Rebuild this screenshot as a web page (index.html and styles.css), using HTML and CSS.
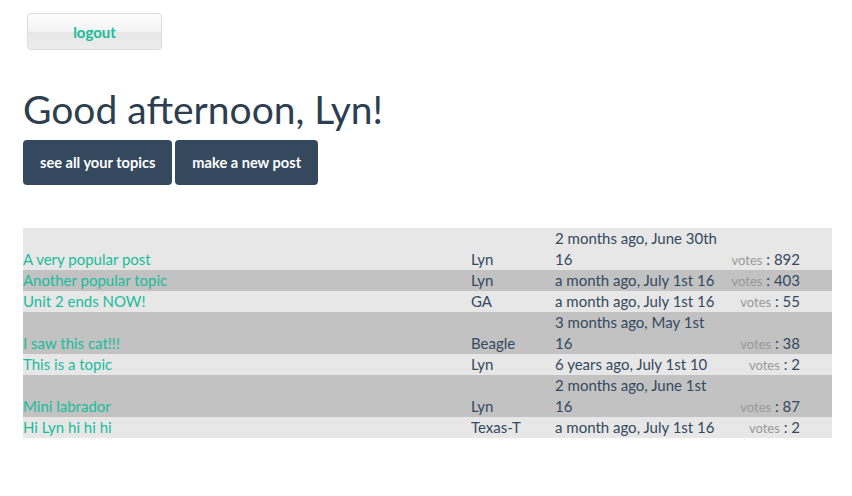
FILE: index.html
```html
<!DOCTYPE html>
<html>
<head>
<meta charset="utf-8">
<link rel="stylesheet" href="styles.css">
</head>
<body>
<div class="page">
  <div class="topbar">
    <button class="logout">logout</button>
  </div>
  <h1 class="greeting">Good afternoon, Lyn!</h1>
  <div class="actions">
    <button class="btn-dark">see all your topics</button>
    <button class="btn-dark">make a new post</button>
  </div>
  <table class="topics">
    <colgroup>
      <col class="c-title"><col class="c-author"><col class="c-date"><col class="c-votes">
    </colgroup>
    <tr class="light">
      <td><a href="#">A very popular post</a></td><td>Lyn</td><td>2 months ago, June 30th 16</td><td class="votes"><span class="vl">votes</span> : 892</td>
    </tr>
    <tr class="dark">
      <td><a href="#">Another popular topic</a></td><td>Lyn</td><td>a month ago, July 1st 16</td><td class="votes"><span class="vl">votes</span> : 403</td>
    </tr>
    <tr class="light">
      <td><a href="#">Unit 2 ends NOW!</a></td><td>GA</td><td>a month ago, July 1st 16</td><td class="votes"><span class="vl">votes</span> : 55</td>
    </tr>
    <tr class="dark">
      <td><a href="#">I saw this cat!!!</a></td><td>Beagle</td><td>3 months ago, May 1st 16</td><td class="votes"><span class="vl">votes</span> : 38</td>
    </tr>
    <tr class="light">
      <td><a href="#">This is a topic</a></td><td>Lyn</td><td>6 years ago, July 1st 10</td><td class="votes"><span class="vl">votes</span> : 2</td>
    </tr>
    <tr class="dark">
      <td><a href="#">Mini labrador</a></td><td>Lyn</td><td>2 months ago, June 1st 16</td><td class="votes"><span class="vl">votes</span> : 87</td>
    </tr>
    <tr class="light">
      <td><a href="#">Hi Lyn hi hi hi</a></td><td>Texas-T</td><td>a month ago, July 1st 16</td><td class="votes"><span class="vl">votes</span> : 2</td>
    </tr>
  </table>
</div>
</body>
</html>
```
FILE: styles.css
```css
* { box-sizing: border-box; }
body {
  margin: 0;
  font-family: Lato, "Open Sans", sans-serif;
  color: #34495e;
  background: #fff;
}
.page {
  padding: 13px 20px 0 23px;
}
.topbar {
  padding-left: 4px;
}
.logout {
  width: 135px;
  height: 37px;
  border: 1px solid #dcdcdc;
  border-radius: 4px;
  background: linear-gradient(to bottom, #fdfdfd 0%, #f3f3f3 50%, #e6e6e6 52%, #ececec 100%);
  color: #1abc9c;
  font-family: Lato, sans-serif;
  font-weight: 700;
  font-size: 15px;
  padding: 1px 0 0 0;
}
.greeting {
  margin: 36px 0 0 0;
  font-size: 39px;
  font-weight: 400;
  line-height: 46px;
  color: #2c3e50;
}
.actions {
  display: flex;
  gap: 3px;
  margin-top: 8px;
}
.btn-dark {
  height: 45px;
  padding: 0 17px;
  border: none;
  border-radius: 4px;
  background: #34495e;
  color: #fff;
  font-family: Lato, sans-serif;
  font-weight: 700;
  font-size: 14.6px;
}
.topics {
  margin-top: 43px;
  width: 809px;
  border-collapse: collapse;
  font-size: 15px;
  line-height: 21px;
}
.topics td {
  padding: 0;
  vertical-align: bottom;
}
.c-title { width: 448px; }
.c-author { width: 84px; }
.c-date { width: 163px; }
.c-votes { width: 114px; }
.light { background: #e7e7e7; }
.dark { background: #c2c2c2; }
.topics a {
  color: #1abc9c;
  text-decoration: none;
}
.votes {
  text-align: right;
  padding-right: 32px !important;
}
.vl {
  color: #999;
  font-size: 13px;
  line-height: 1;
}
```
